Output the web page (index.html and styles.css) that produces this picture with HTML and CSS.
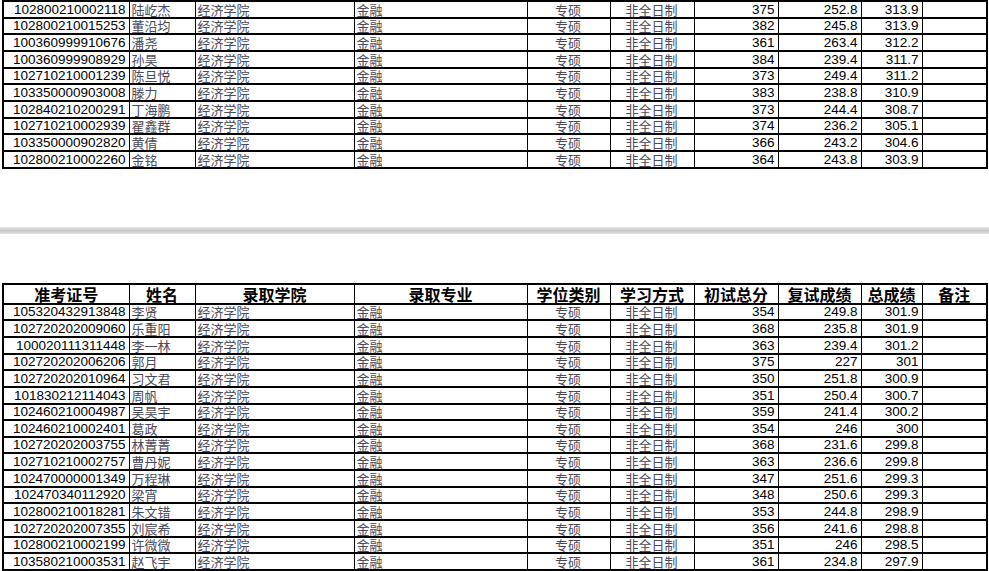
FILE: index.html
```html
<!DOCTYPE html>
<html lang="zh-CN">
<head>
<meta charset="utf-8">
<title>录取名单</title>
<link rel="stylesheet" href="styles.css">
</head>
<body>
<div class="page page-top">
<table class="sheet">
<colgroup>
<col class="c1"><col class="c2"><col class="c3"><col class="c4"><col class="c5"><col class="c6"><col class="c7"><col class="c8"><col class="c9"><col class="c10">
</colgroup>
<tbody>
<tr><td class="id">102800210002118</td><td class="zh">陆屹杰</td><td class="zh">经济学院</td><td class="zh">金融</td><td class="zh ctr">专硕</td><td class="zh ctr">非全日制</td><td class="num">375</td><td class="num">252.8</td><td class="num">313.9</td><td></td></tr>
<tr><td class="id">102800210015253</td><td class="zh">董沿均</td><td class="zh">经济学院</td><td class="zh">金融</td><td class="zh ctr">专硕</td><td class="zh ctr">非全日制</td><td class="num">382</td><td class="num">245.8</td><td class="num">313.9</td><td></td></tr>
<tr><td class="id">100360999910676</td><td class="zh">潘尧</td><td class="zh">经济学院</td><td class="zh">金融</td><td class="zh ctr">专硕</td><td class="zh ctr">非全日制</td><td class="num">361</td><td class="num">263.4</td><td class="num">312.2</td><td></td></tr>
<tr><td class="id">100360999908929</td><td class="zh">孙昊</td><td class="zh">经济学院</td><td class="zh">金融</td><td class="zh ctr">专硕</td><td class="zh ctr">非全日制</td><td class="num">384</td><td class="num">239.4</td><td class="num">311.7</td><td></td></tr>
<tr><td class="id">102710210001239</td><td class="zh">陈旦悦</td><td class="zh">经济学院</td><td class="zh">金融</td><td class="zh ctr">专硕</td><td class="zh ctr">非全日制</td><td class="num">373</td><td class="num">249.4</td><td class="num">311.2</td><td></td></tr>
<tr><td class="id">103350000903008</td><td class="zh">滕力</td><td class="zh">经济学院</td><td class="zh">金融</td><td class="zh ctr">专硕</td><td class="zh ctr">非全日制</td><td class="num">383</td><td class="num">238.8</td><td class="num">310.9</td><td></td></tr>
<tr><td class="id">102840210200291</td><td class="zh">丁海鹏</td><td class="zh">经济学院</td><td class="zh">金融</td><td class="zh ctr">专硕</td><td class="zh ctr">非全日制</td><td class="num">373</td><td class="num">244.4</td><td class="num">308.7</td><td></td></tr>
<tr><td class="id">102710210002939</td><td class="zh">翟鑫群</td><td class="zh">经济学院</td><td class="zh">金融</td><td class="zh ctr">专硕</td><td class="zh ctr">非全日制</td><td class="num">374</td><td class="num">236.2</td><td class="num">305.1</td><td></td></tr>
<tr><td class="id">103350000902820</td><td class="zh">黄倩</td><td class="zh">经济学院</td><td class="zh">金融</td><td class="zh ctr">专硕</td><td class="zh ctr">非全日制</td><td class="num">366</td><td class="num">243.2</td><td class="num">304.6</td><td></td></tr>
<tr><td class="id">102800210002260</td><td class="zh">金铭</td><td class="zh">经济学院</td><td class="zh">金融</td><td class="zh ctr">专硕</td><td class="zh ctr">非全日制</td><td class="num">364</td><td class="num">243.8</td><td class="num">303.9</td><td></td></tr>
</tbody>
</table>
</div>
<div class="page-break"></div>
<div class="page page-bottom">
<table class="sheet">
<colgroup>
<col class="c1"><col class="c2"><col class="c3"><col class="c4"><col class="c5"><col class="c6"><col class="c7"><col class="c8"><col class="c9"><col class="c10">
</colgroup>
<thead>
<tr class="head"><th>准考证号</th><th>姓名</th><th>录取学院</th><th>录取专业</th><th>学位类别</th><th>学习方式</th><th>初试总分</th><th>复试成绩</th><th>总成绩</th><th>备注</th></tr>
</thead>
<tbody>
<tr><td class="id">105320432913848</td><td class="zh">李贤</td><td class="zh">经济学院</td><td class="zh">金融</td><td class="zh ctr">专硕</td><td class="zh ctr">非全日制</td><td class="num">354</td><td class="num">249.8</td><td class="num">301.9</td><td></td></tr>
<tr><td class="id">102720202009060</td><td class="zh">乐重阳</td><td class="zh">经济学院</td><td class="zh">金融</td><td class="zh ctr">专硕</td><td class="zh ctr">非全日制</td><td class="num">368</td><td class="num">235.8</td><td class="num">301.9</td><td></td></tr>
<tr><td class="id">100020111311448</td><td class="zh">李一林</td><td class="zh">经济学院</td><td class="zh">金融</td><td class="zh ctr">专硕</td><td class="zh ctr">非全日制</td><td class="num">363</td><td class="num">239.4</td><td class="num">301.2</td><td></td></tr>
<tr><td class="id">102720202006206</td><td class="zh">郭月</td><td class="zh">经济学院</td><td class="zh">金融</td><td class="zh ctr">专硕</td><td class="zh ctr">非全日制</td><td class="num">375</td><td class="num">227</td><td class="num">301</td><td></td></tr>
<tr><td class="id">102720202010964</td><td class="zh">习文君</td><td class="zh">经济学院</td><td class="zh">金融</td><td class="zh ctr">专硕</td><td class="zh ctr">非全日制</td><td class="num">350</td><td class="num">251.8</td><td class="num">300.9</td><td></td></tr>
<tr><td class="id">101830212114043</td><td class="zh">周帆</td><td class="zh">经济学院</td><td class="zh">金融</td><td class="zh ctr">专硕</td><td class="zh ctr">非全日制</td><td class="num">351</td><td class="num">250.4</td><td class="num">300.7</td><td></td></tr>
<tr><td class="id">102460210004987</td><td class="zh">吴昊宇</td><td class="zh">经济学院</td><td class="zh">金融</td><td class="zh ctr">专硕</td><td class="zh ctr">非全日制</td><td class="num">359</td><td class="num">241.4</td><td class="num">300.2</td><td></td></tr>
<tr><td class="id">102460210002401</td><td class="zh">葛政</td><td class="zh">经济学院</td><td class="zh">金融</td><td class="zh ctr">专硕</td><td class="zh ctr">非全日制</td><td class="num">354</td><td class="num">246</td><td class="num">300</td><td></td></tr>
<tr><td class="id">102720202003755</td><td class="zh">林菁菁</td><td class="zh">经济学院</td><td class="zh">金融</td><td class="zh ctr">专硕</td><td class="zh ctr">非全日制</td><td class="num">368</td><td class="num">231.6</td><td class="num">299.8</td><td></td></tr>
<tr><td class="id">102710210002757</td><td class="zh">曹丹妮</td><td class="zh">经济学院</td><td class="zh">金融</td><td class="zh ctr">专硕</td><td class="zh ctr">非全日制</td><td class="num">363</td><td class="num">236.6</td><td class="num">299.8</td><td></td></tr>
<tr><td class="id">102470000001349</td><td class="zh">万程琳</td><td class="zh">经济学院</td><td class="zh">金融</td><td class="zh ctr">专硕</td><td class="zh ctr">非全日制</td><td class="num">347</td><td class="num">251.6</td><td class="num">299.3</td><td></td></tr>
<tr><td class="id">102470340112920</td><td class="zh">梁宵</td><td class="zh">经济学院</td><td class="zh">金融</td><td class="zh ctr">专硕</td><td class="zh ctr">非全日制</td><td class="num">348</td><td class="num">250.6</td><td class="num">299.3</td><td></td></tr>
<tr><td class="id">102800210018281</td><td class="zh">朱文错</td><td class="zh">经济学院</td><td class="zh">金融</td><td class="zh ctr">专硕</td><td class="zh ctr">非全日制</td><td class="num">353</td><td class="num">244.8</td><td class="num">298.9</td><td></td></tr>
<tr><td class="id">102720202007355</td><td class="zh">刘宸希</td><td class="zh">经济学院</td><td class="zh">金融</td><td class="zh ctr">专硕</td><td class="zh ctr">非全日制</td><td class="num">356</td><td class="num">241.6</td><td class="num">298.8</td><td></td></tr>
<tr><td class="id">102800210002199</td><td class="zh">许微微</td><td class="zh">经济学院</td><td class="zh">金融</td><td class="zh ctr">专硕</td><td class="zh ctr">非全日制</td><td class="num">351</td><td class="num">246</td><td class="num">298.5</td><td></td></tr>
<tr><td class="id">103580210003531</td><td class="zh">赵飞宇</td><td class="zh">经济学院</td><td class="zh">金融</td><td class="zh ctr">专硕</td><td class="zh ctr">非全日制</td><td class="num">361</td><td class="num">234.8</td><td class="num">297.9</td><td></td></tr>
</tbody>
</table>
</div>
</body>
</html>
```
FILE: styles.css
```css
html, body {
  margin: 0;
  padding: 0;
  background: #ffffff;
  overflow: hidden;
}

body {
  width: 989px;
  height: 571px;
  font-family: "Liberation Sans", Arial, "Noto Sans CJK SC", sans-serif;
}

.page {
  padding-left: 2px;
}

.page-top {
  padding-top: 0;
}

.page-break {
  margin-top: 58px;
  height: 7px;
  background: linear-gradient(#e6e6e6, #c9c9c9 45%, #cdcdcd 65%, #e2e2e2);
}

.page-bottom {
  padding-top: 49px;
}

.sheet {
  border-collapse: collapse;
  table-layout: fixed;
  width: 984px;
}

.c1 { width: 126px; }
.c2 { width: 66px; }
.c3 { width: 159px; }
.c4 { width: 173px; }
.c5 { width: 83px; }
.c6 { width: 84px; }
.c7 { width: 84px; }
.c8 { width: 83px; }
.c9 { width: 61px; }
.c10 { width: 65px; }

.sheet td,
.sheet th {
  border-left: 1px solid #000;
  border-right: 1px solid #000;
  border-top: 2px solid #000;
  border-bottom: 2px solid #000;
  padding: 0 3px;
  white-space: nowrap;
  overflow: hidden;
}

.sheet tr > :first-child {
  border-left-width: 2px;
}

.sheet tr > :last-child {
  border-right-width: 2px;
}

.sheet td {
  height: 14.67px;
  line-height: 14px;
  vertical-align: bottom;
  font-size: 13.5px;
  color: #000;
}

.sheet td.id {
  text-align: right;
  padding-right: 3px;
}

.sheet td.zh {
  font-family: "Noto Sans CJK SC", sans-serif;
  font-size: 13px;
  line-height: 14px;
  color: #4a4a5a;
  text-align: left;
  padding-left: 2px;
}

.sheet td.ctr {
  text-align: center;
}

.sheet td.num {
  text-align: right;
  padding-right: 3px;
}

.sheet th {
  height: 18px;
  line-height: 18px;
  font-family: "Noto Sans CJK SC", sans-serif;
  font-size: 16px;
  font-weight: 700;
  color: #000;
  text-align: center;
  vertical-align: middle;
  padding: 0;
  overflow: visible;
}
```
